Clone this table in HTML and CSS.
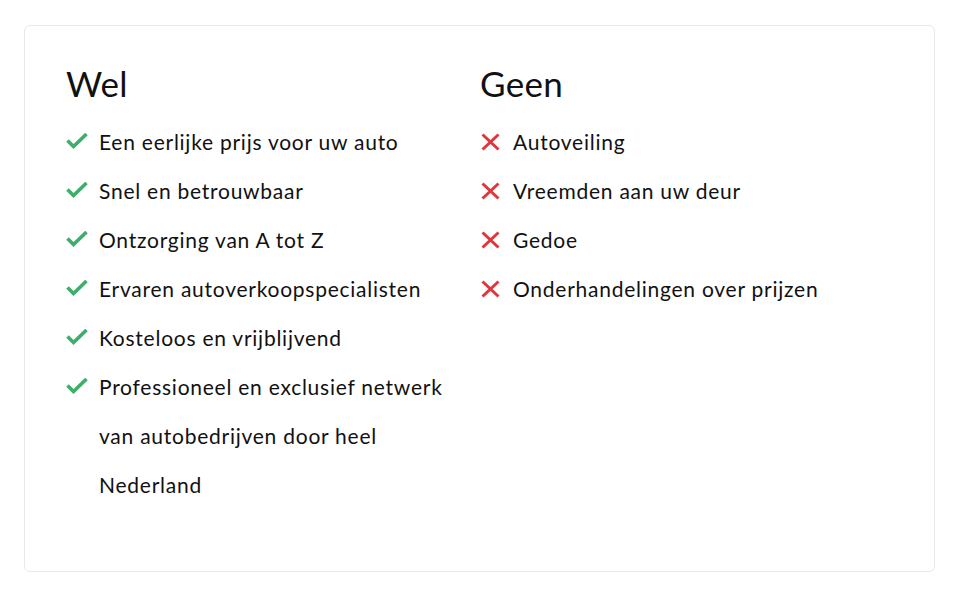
FILE: index.html
```html
<!DOCTYPE html>
<html lang="nl">
<head>
<meta charset="utf-8">
<title>Wel / Geen</title>
<link rel="stylesheet" href="styles.css">
</head>
<body>
<div class="page">
  <section class="card">
    <div class="col">
      <h2 class="title">Wel</h2>
      <ul class="list">
        <li class="item"><span class="icon"><svg class="check" width="22" height="16" viewBox="0 0 22 16"><polyline points="1.5,7.5 7.5,13.5 20.5,1" fill="none" stroke="#3dae6b" stroke-width="3.6"/></svg></span><span>Een eerlijke prijs voor uw auto</span></li>
        <li class="item"><span class="icon"><svg class="check" width="22" height="16" viewBox="0 0 22 16"><polyline points="1.5,7.5 7.5,13.5 20.5,1" fill="none" stroke="#3dae6b" stroke-width="3.6"/></svg></span><span>Snel en betrouwbaar</span></li>
        <li class="item"><span class="icon"><svg class="check" width="22" height="16" viewBox="0 0 22 16"><polyline points="1.5,7.5 7.5,13.5 20.5,1" fill="none" stroke="#3dae6b" stroke-width="3.6"/></svg></span><span>Ontzorging van A tot Z</span></li>
        <li class="item"><span class="icon"><svg class="check" width="22" height="16" viewBox="0 0 22 16"><polyline points="1.5,7.5 7.5,13.5 20.5,1" fill="none" stroke="#3dae6b" stroke-width="3.6"/></svg></span><span>Ervaren autoverkoopspecialisten</span></li>
        <li class="item"><span class="icon"><svg class="check" width="22" height="16" viewBox="0 0 22 16"><polyline points="1.5,7.5 7.5,13.5 20.5,1" fill="none" stroke="#3dae6b" stroke-width="3.6"/></svg></span><span>Kosteloos en vrijblijvend</span></li>
        <li class="item"><span class="icon"><svg class="check" width="22" height="16" viewBox="0 0 22 16"><polyline points="1.5,7.5 7.5,13.5 20.5,1" fill="none" stroke="#3dae6b" stroke-width="3.6"/></svg></span><span>Professioneel en exclusief netwerk van autobedrijven door heel Nederland</span></li>
      </ul>
    </div>
    <div class="col">
      <h2 class="title">Geen</h2>
      <ul class="list">
        <li class="item"><span class="icon"><svg class="cross" width="19" height="18" viewBox="0 0 19 18"><path d="M1.5 1.5 L17.5 16.5 M17.5 1.5 L1.5 16.5" fill="none" stroke="#e2353b" stroke-width="3"/></svg></span><span>Autoveiling</span></li>
        <li class="item"><span class="icon"><svg class="cross" width="19" height="18" viewBox="0 0 19 18"><path d="M1.5 1.5 L17.5 16.5 M17.5 1.5 L1.5 16.5" fill="none" stroke="#e2353b" stroke-width="3"/></svg></span><span>Vreemden aan uw deur</span></li>
        <li class="item"><span class="icon"><svg class="cross" width="19" height="18" viewBox="0 0 19 18"><path d="M1.5 1.5 L17.5 16.5 M17.5 1.5 L1.5 16.5" fill="none" stroke="#e2353b" stroke-width="3"/></svg></span><span>Gedoe</span></li>
        <li class="item"><span class="icon"><svg class="cross" width="19" height="18" viewBox="0 0 19 18"><path d="M1.5 1.5 L17.5 16.5 M17.5 1.5 L1.5 16.5" fill="none" stroke="#e2353b" stroke-width="3"/></svg></span><span>Onderhandelingen over prijzen</span></li>
      </ul>
    </div>
  </section>
</div>
</body>
</html>
```

FILE: styles.css
```css
* { box-sizing: border-box; }
html, body { margin: 0; padding: 0; background: #fff; }
body {
  font-family: Lato, "Noto Sans", sans-serif;
  color: #111;
}
.page {
  padding: 25px 25px 24px 24px;
}
.card {
  border: 1px solid #e9e9e9;
  border-radius: 6px;
  padding: 37px 41px 62px 41px;
  display: grid;
  grid-template-columns: 414px 1fr;
  height: 547px;
}
.title {
  margin: 0;
  font-size: 35px;
  font-weight: 400;
  line-height: 40px;
  letter-spacing: 0.3px;
}
.list {
  list-style: none;
  margin: 14px 0 0 0;
  padding: 0;
}
.item {
  display: flex;
  align-items: flex-start;
  font-size: 21px;
  line-height: 49px;
  letter-spacing: 0.75px;
  padding-right: 20px;
}
.icon {
  flex: 0 0 33px;
  height: 49px;
  display: flex;
  align-items: center;
}
.cross { margin-left: 1px; margin-top: 1px; }
.check { margin-top: -2px; }
```
